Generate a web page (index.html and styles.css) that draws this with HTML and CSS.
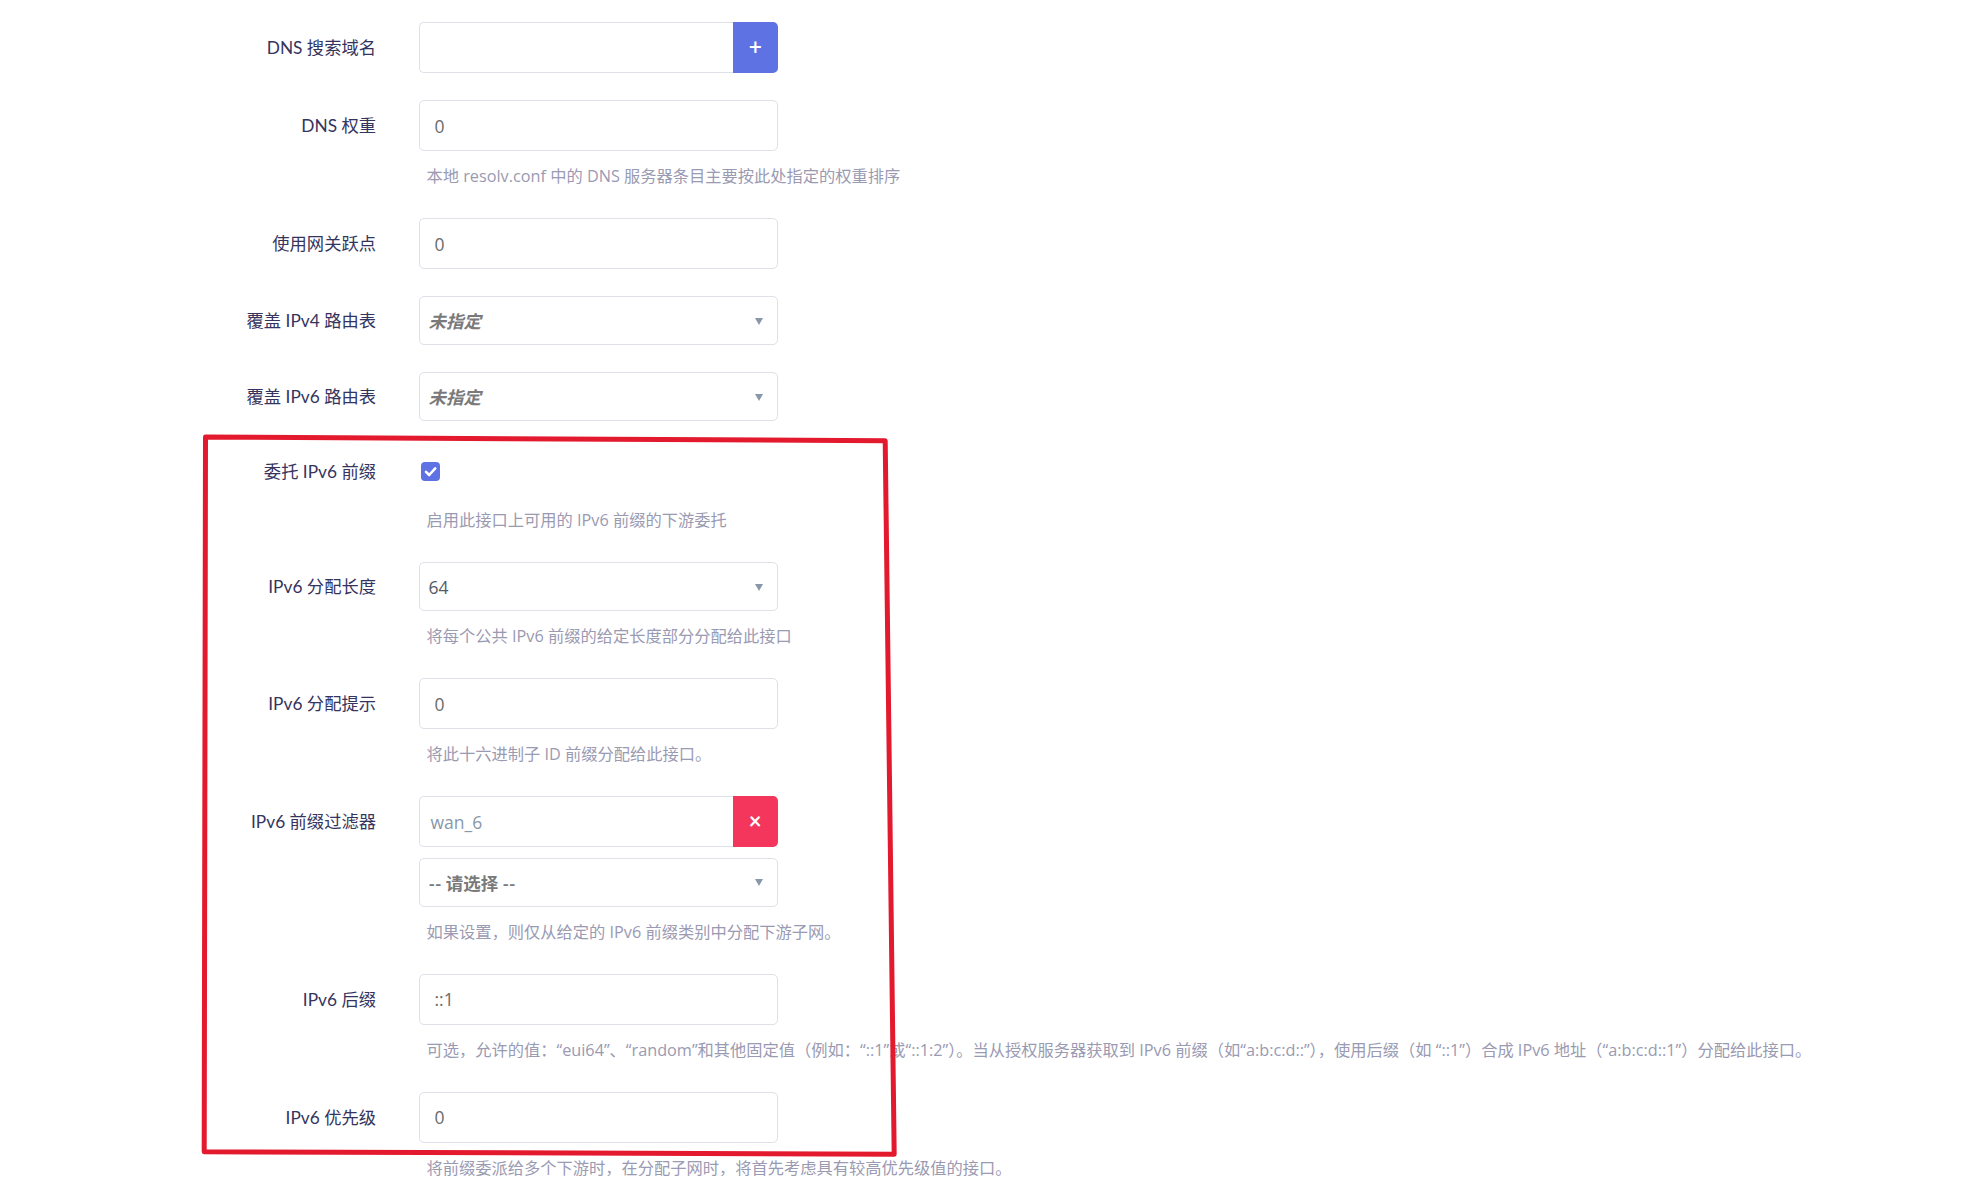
FILE: index.html
```html
<!DOCTYPE html>
<html lang="zh-CN">
<head>
<meta charset="utf-8">
<title>接口设置</title>
<link rel="stylesheet" href="styles.css">
</head>
<body>
<div class="page">
  <div class="form">
    <div class="row">
      <div class="lbl">DNS 搜索域名</div>
      <div class="field">
        <div class="dyn">
          <div class="inp grow"></div>
          <div class="btn add">+</div>
        </div>
      </div>
    </div>

    <div class="row">
      <div class="lbl">DNS 权重</div>
      <div class="field">
        <div class="inp"><span class="val">0</span></div>
        <div class="help">本地 resolv.conf 中的 DNS 服务器条目主要按此处指定的权重排序</div>
      </div>
    </div>

    <div class="row">
      <div class="lbl">使用网关跃点</div>
      <div class="field">
        <div class="inp"><span class="val">0</span></div>
      </div>
    </div>

    <div class="row sel-row">
      <div class="lbl">覆盖 IPv4 路由表</div>
      <div class="field">
        <div class="sel"><span class="sel-txt em">未指定</span><span class="arrow"></span></div>
      </div>
    </div>

    <div class="row sel-row">
      <div class="lbl">覆盖 IPv6 路由表</div>
      <div class="field">
        <div class="sel"><span class="sel-txt em">未指定</span><span class="arrow"></span></div>
      </div>
    </div>

    <div class="row chk-row">
      <div class="lbl">委托 IPv6 前缀</div>
      <div class="field">
        <div class="chk-line">
          <span class="chk">
            <svg viewBox="0 0 19 19" width="19" height="19"><path d="M5 9.8 L8.2 13 L14.2 6.4" fill="none" stroke="#fff" stroke-width="2.6" stroke-linecap="round" stroke-linejoin="round"/></svg>
          </span>
        </div>
        <div class="help">启用此接口上可用的 IPv6 前缀的下游委托</div>
      </div>
    </div>

    <div class="row sel-row">
      <div class="lbl">IPv6 分配长度</div>
      <div class="field">
        <div class="sel"><span class="sel-txt plain">64</span><span class="arrow"></span></div>
        <div class="help">将每个公共 IPv6 前缀的给定长度部分分配给此接口</div>
      </div>
    </div>

    <div class="row">
      <div class="lbl">IPv6 分配提示</div>
      <div class="field">
        <div class="inp"><span class="val">0</span></div>
        <div class="help">将此十六进制子 ID 前缀分配给此接口。</div>
      </div>
    </div>

    <div class="row">
      <div class="lbl">IPv6 前缀过滤器</div>
      <div class="field">
        <div class="dyn">
          <div class="inp grow tag"><span class="tagval">wan_6</span></div>
          <div class="btn del">×</div>
        </div>
        <div class="sel second"><span class="sel-txt strong">-- 请选择 --</span><span class="arrow"></span></div>
        <div class="help">如果设置，则仅从给定的 IPv6 前缀类别中分配下游子网。</div>
      </div>
    </div>

    <div class="row">
      <div class="lbl">IPv6 后缀</div>
      <div class="field">
        <div class="inp"><span class="val">::1</span></div>
        <div class="help">可选，允许的值：“eui64”、“random”和其他固定值（例如：“::1”或“::1:2”）。当从授权服务器获取到 IPv6 前缀（如“a:b:c:d::”），使用后缀（如 “::1”）合成 IPv6 地址（“a:b:c:d::1”）分配给此接口。</div>
      </div>
    </div>

    <div class="row">
      <div class="lbl">IPv6 优先级</div>
      <div class="field">
        <div class="inp"><span class="val">0</span></div>
        <div class="help">将前缀委派给多个下游时，在分配子网时，将首先考虑具有较高优先级值的接口。</div>
      </div>
    </div>
  </div>

  <svg class="annot" viewBox="0 0 1986 1196" width="1986" height="1196">
    <path d="M205.5 437 L885.2 440.8 L894.2 1154.2 L204.2 1151.8 Z" fill="none" stroke="#e3192e" stroke-width="5" stroke-linejoin="round"/>
  </svg>
</div>
</body>
</html>
```

FILE: styles.css
```css
html, body {
  margin: 0;
  padding: 0;
  background: #ffffff;
}

body {
  font-family: "Lato", "Noto Sans CJK SC", "Noto Sans", sans-serif;
  color: #32325d;
}

.page {
  position: relative;
  width: 1986px;
  height: 1196px;
  overflow: hidden;
}

.form {
  padding-top: 22px;
  display: flex;
  flex-direction: column;
}

.row {
  display: grid;
  grid-template-columns: 376px auto;
  column-gap: 42.5px;
  align-items: start;
  margin-bottom: 27px;
}

.lbl {
  height: 51px;
  display: flex;
  align-items: center;
  justify-content: flex-end;
  font-size: 17.3px;
  color: #34345e;
  white-space: nowrap;
  padding-bottom: 2px;
  box-sizing: border-box;
}

.sel-row .lbl {
  height: 49px;
}

.chk-row .lbl {
  height: 47px;
}

.field {
  display: flex;
  flex-direction: column;
  align-items: flex-start;
}

.inp {
  width: 359.5px;
  height: 51px;
  box-sizing: border-box;
  border: 1px solid #dfe1e8;
  border-radius: 5px;
  background: #fff;
  display: flex;
  align-items: center;
  padding-left: 15px;
}

.val {
  font-family: "Open Sans", "Noto Sans CJK SC", sans-serif;
  font-size: 17.5px;
  color: #6a6a6a;
}

.dyn {
  width: 359.5px;
  height: 51px;
  display: flex;
}

.dyn .inp.grow {
  width: auto;
  flex: 1;
  border-radius: 5px 0 0 5px;
  border-right: none;
}

.tag {
  padding-left: 11px;
}

.tagval {
  font-family: "Open Sans", "Noto Sans CJK SC", sans-serif;
  font-size: 17.5px;
  color: #8898aa;
}

.btn {
  width: 45.5px;
  height: 51px;
  border-radius: 0 5px 5px 0;
  display: flex;
  align-items: center;
  justify-content: center;
  color: #fff;
  box-sizing: border-box;
}

.btn.add {
  background: #5e72e4;
  font-family: "Open Sans", sans-serif;
  font-size: 23px;
  font-weight: 600;
  padding-bottom: 2px;
}

.btn.del {
  background: #f5365c;
  font-size: 22px;
  font-weight: 700;
  padding-bottom: 2px;
}

.sel {
  width: 359.5px;
  height: 49px;
  box-sizing: border-box;
  border: 1px solid #dfe1e8;
  border-radius: 5px;
  background: #fff;
  display: flex;
  align-items: center;
  justify-content: space-between;
  padding: 0 14px 0 9px;
}

.sel.second {
  margin-top: 10.5px;
}

.sel-txt {
  font-size: 17.5px;
}

.sel-txt.em {
  font-weight: 700;
  font-style: italic;
  color: #7a7a7a;
}

.sel-txt.plain {
  font-family: "Open Sans", "Noto Sans CJK SC", sans-serif;
  font-size: 17.5px;
  color: #555a66;
}

.sel-txt.strong {
  font-weight: 700;
  color: #7a7a7a;
}

.arrow {
  width: 0;
  height: 0;
  border-left: 4px solid transparent;
  border-right: 4px solid transparent;
  border-top: 7px solid #8898aa;
  margin-top: 1px;
}

.chk-line {
  height: 47px;
  display: flex;
  align-items: center;
  padding-left: 2.5px;
}

.chk {
  width: 19px;
  height: 19px;
  border-radius: 4px;
  background: #5e72e4;
  display: block;
}

.chk svg {
  display: block;
}

.help {
  margin: 14px 0 4px 8px;
  line-height: 22px;
  font-family: "Open Sans", "Noto Sans CJK SC", sans-serif;
  font-size: 16.25px;
  color: #9a9ab2;
  white-space: nowrap;
}

.annot {
  position: absolute;
  left: 0;
  top: 0;
  pointer-events: none;
}
```
